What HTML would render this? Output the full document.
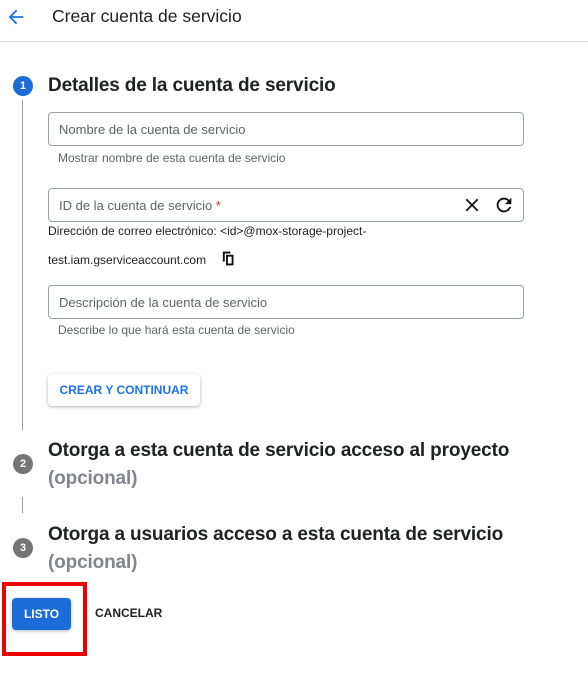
<!DOCTYPE html>
<html><head><meta charset="utf-8"><style>
*{box-sizing:border-box;margin:0;padding:0}
body{width:588px;height:675px;background:#fff;font-family:"Liberation Sans",sans-serif;position:relative;overflow:hidden;color:#202124}
.a{position:absolute;white-space:nowrap}
.inp{position:absolute;left:48px;width:476px;height:34px;border:1px solid #9aa0a6;border-radius:4px}
.ph{position:absolute;left:10px;top:9px;font-size:13px;color:#5f6368}
.help{font-size:12px;color:#5f6368}
.circ{position:absolute;left:13px;width:20px;height:20px;border-radius:50%;color:#fff;font-size:11px;font-weight:bold;text-align:center;line-height:20px}
.t{font-size:19px;font-weight:bold;color:#202124;letter-spacing:-0.15px}
.op{color:#80868b}
.vl{position:absolute;left:22px;width:1px;background:#9aa0a6}
</style></head><body>
<svg class="a" style="left:5px;top:6px" width="22" height="22" viewBox="0 0 24 24"><path d="M20 11H7.83l5.59-5.59L12 4l-8 8 8 8 1.41-1.41L7.83 13H20z" fill="#1a73e8"/></svg>
<div class="a" style="left:52px;top:6px;font-size:17.5px;color:#202124">Crear cuenta de servicio</div>
<div class="a" style="left:0;top:41px;width:588px;height:1px;background:#dadce0"></div>

<div class="circ" style="top:76px;background:#1a6dd8">1</div>
<div class="a t" style="left:48px;top:75px">Detalles de la cuenta de servicio</div>
<div class="vl" style="top:100px;height:330px"></div>

<div class="inp" style="top:112px"><span class="ph">Nombre de la cuenta de servicio</span></div>
<div class="a help" style="left:58px;top:151px">Mostrar nombre de esta cuenta de servicio</div>

<div class="inp" style="top:188px"><span class="ph">ID de la cuenta de servicio <span style="color:#d93025">*</span></span>
<svg class="a" style="left:412px;top:5px" width="22" height="22" viewBox="0 0 24 24"><path d="M19 6.41L17.59 5 12 10.59 6.41 5 5 6.41 10.59 12 5 17.59 6.41 19 12 13.41 17.59 19 19 17.59 13.41 12z" fill="#111"/></svg>
<svg class="a" style="left:444px;top:5px" width="22" height="22" viewBox="0 0 24 24"><path d="M17.65 6.35A7.96 7.96 0 0 0 12 4a8 8 0 1 0 7.73 10h-2.08A6 6 0 1 1 12 6c1.66 0 3.14.69 4.22 1.78L13 11h7V4l-2.35 2.35z" fill="#111"/></svg>
</div>
<div class="a" style="left:48px;top:224px;font-size:12px;color:#202124">Dirección de correo electrónico: &lt;id&gt;@mox-storage-project-</div>
<div class="a" style="left:48px;top:253px;font-size:12px;color:#202124">test.iam.gserviceaccount.com</div>
<svg class="a" style="left:221px;top:251px" width="15" height="15" viewBox="0 0 24 24"><path d="M15 1H3v16h3V4h9z" fill="#111"/><path d="M8 6h12v17H8zM11 9v11h6V9z" fill="#111"/></svg>

<div class="inp" style="top:285px"><span class="ph">Descripción de la cuenta de servicio</span></div>
<div class="a help" style="left:58px;top:323px">Describe lo que hará esta cuenta de servicio</div>

<div class="a" style="left:48px;top:374px;width:152px;height:32px;border-radius:4px;box-shadow:0 1px 3px rgba(0,0,0,.3);color:#1a73e8;font-size:12px;font-weight:bold;text-align:center;line-height:32px">CREAR Y CONTINUAR</div>

<div class="circ" style="top:454px;background:#757575">2</div>
<div class="a t" style="left:48px;top:440px">Otorga a esta cuenta de servicio acceso al proyecto</div>
<div class="a t op" style="left:48px;top:468px">(opcional)</div>
<div class="vl" style="top:497px;height:16px"></div>

<div class="circ" style="top:538px;background:#757575">3</div>
<div class="a t" style="left:48px;top:524px">Otorga a usuarios acceso a esta cuenta de servicio</div>
<div class="a t op" style="left:48px;top:552px">(opcional)</div>

<div class="a" style="left:2px;top:582px;width:85px;height:74px;border:4px solid #ee0000"></div>
<div class="a" style="left:12px;top:598px;width:59px;height:32px;border-radius:4px;background:#1a6dd8;box-shadow:0 1px 3px rgba(0,0,0,.3);color:#fff;font-size:12px;font-weight:bold;text-align:center;line-height:32px">LISTO</div>
<div class="a" style="left:95px;top:606px;font-size:12px;font-weight:bold;color:#202124">CANCELAR</div>
</body></html>
